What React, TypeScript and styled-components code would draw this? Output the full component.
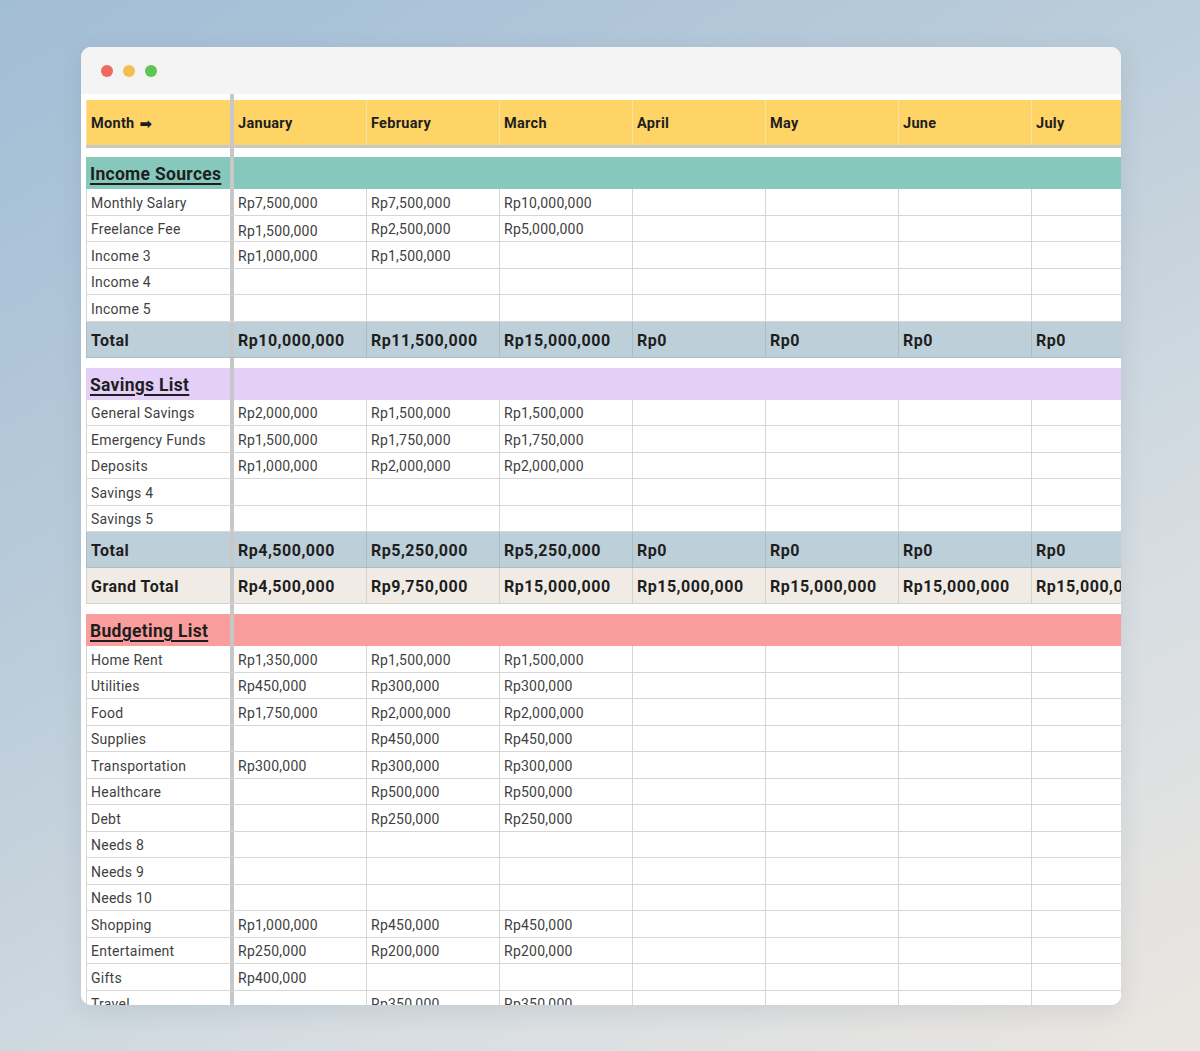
import React from 'react';
import styled, { createGlobalStyle, css } from 'styled-components';

const GlobalStyle = createGlobalStyle`
  html, body { margin: 0; padding: 0; }
  body {
    width: 1200px;
    height: 1051px;
    overflow: hidden;
    background: linear-gradient(150deg, #a2bdd6 0%, #bccdda 40%, #d6dde2 70%, #ebe6e1 100%);
    font-family: Roboto, "Liberation Sans", Arial, sans-serif;
  }
`;

const Page = styled.div`
  padding: 47px 0 0 81px;
`;

const Window = styled.div`
  width: 1040px;
  height: 958px;
  background: #ffffff;
  border-radius: 10px;
  overflow: hidden;
  box-shadow: 0 6px 24px rgba(40, 60, 80, 0.10);
  display: flex;
  flex-direction: column;
`;

const TitleBar = styled.div`
  height: 47px;
  flex: none;
  background: #f4f4f5;
  display: flex;
  align-items: center;
  gap: 10px;
  padding-left: 20px;
`;

const Light = styled.span<{ $c: string }>`
  width: 12px;
  height: 12px;
  border-radius: 50%;
  background: ${(p) => p.$c};
`;

const Sheet = styled.div`
  padding-left: 5px;
  display: flex;
  flex-direction: column;
`;

type Kind = 'blank' | 'head' | 'data' | 'total' | 'grand' | 'freeze';

const rowBg: Record<Kind, string> = {
  blank: '#ffffff',
  head: '#fed466',
  data: '#ffffff',
  total: '#bdcfd8',
  grand: '#f0ece5',
  freeze: '#c8c8c8',
};

const lineColor: Record<Kind, string> = {
  blank: 'transparent',
  head: '#f7e3a8',
  data: '#d6d6d6',
  total: '#aabcc6',
  grand: '#d8d3ca',
  freeze: '#c8c8c8',
};

const fontSize: Record<Kind, string> = {
  blank: '14px',
  head: '14.5px',
  data: '14px',
  total: '16px',
  grand: '16px',
  freeze: '14px',
};

const spacing: Record<Kind, string> = {
  blank: '0',
  head: '0.3px',
  data: '0.25px',
  total: '0.5px',
  grand: '0.5px',
  freeze: '0',
};

const Row = styled.div<{ $h: number; $kind: Kind }>`
  display: grid;
  grid-template-columns: 148px repeat(7, 133px);
  height: ${(p) => p.$h}px;
  flex: none;
  background: ${(p) => rowBg[p.$kind]};
  box-sizing: border-box;
  ${(p) =>
    p.$kind === 'data' || p.$kind === 'total' || p.$kind === 'grand'
      ? css`border-bottom: 1px solid ${lineColor[p.$kind]};`
      : ''}
`;

const Cell = styled.div<{ $kind: Kind; $low?: boolean }>`
  box-sizing: border-box;
  padding: 2px 4px 0;
  display: flex;
  align-items: ${(p) => (p.$low ? 'flex-end' : 'center')};
  ${(p) => (p.$low ? css`padding-bottom: 2px;` : '')}
  white-space: nowrap;
  overflow: hidden;
  border-right: 1px solid ${(p) => lineColor[p.$kind]};
  font-size: ${(p) => fontSize[p.$kind]};
  font-weight: ${(p) => (p.$kind === 'data' || p.$kind === 'blank' ? 400 : 700)};
  color: ${(p) => (p.$kind === 'data' ? '#3f3f3f' : '#1e1e1e')};
  letter-spacing: ${(p) => spacing[p.$kind]};
`;

const LabelCell = styled(Cell)`
  border-left: 1px solid ${(p) => (p.$kind === 'blank' ? 'transparent' : lineColor[p.$kind])};
  border-right: 4px solid #c8c8c8;
`;

const SectionRow = styled.div<{ $bg: string }>`
  display: grid;
  grid-template-columns: 148px 1fr;
  height: 32px;
  flex: none;
  background: ${(p) => p.$bg};
`;

const SectionLabel = styled.div`
  box-sizing: border-box;
  border-right: 4px solid #c8c8c8;
  padding: 2px 4px 0;
  display: flex;
  align-items: center;
  font-size: 17.5px;
  font-weight: 700;
  letter-spacing: 0.3px;
  color: #1e1e1e;
  text-decoration: underline;
  text-underline-offset: 3px;
  text-decoration-thickness: 1.5px;
  white-space: nowrap;
`;

const SectionFill = styled.div``;

const Arrow = styled.span`
  font-family: "DejaVu Sans", sans-serif;
  font-size: 15px;
  font-weight: 700;
  margin-left: 5px;
`;

const months = ['January', 'February', 'March', 'April', 'May', 'June', 'July'];

type DataRow = { label: string; values: string[]; low?: number[] };

const income: DataRow[] = [
  { label: 'Monthly Salary', values: ['Rp7,500,000', 'Rp7,500,000', 'Rp10,000,000'] },
  { label: 'Freelance Fee', values: ['Rp1,500,000', 'Rp2,500,000', 'Rp5,000,000'], low: [0] },
  { label: 'Income 3', values: ['Rp1,000,000', 'Rp1,500,000'] },
  { label: 'Income 4', values: [] },
  { label: 'Income 5', values: [] },
];

const savings: DataRow[] = [
  { label: 'General Savings', values: ['Rp2,000,000', 'Rp1,500,000', 'Rp1,500,000'] },
  { label: 'Emergency Funds', values: ['Rp1,500,000', 'Rp1,750,000', 'Rp1,750,000'] },
  { label: 'Deposits', values: ['Rp1,000,000', 'Rp2,000,000', 'Rp2,000,000'] },
  { label: 'Savings 4', values: [] },
  { label: 'Savings 5', values: [] },
];

const budgeting: DataRow[] = [
  { label: 'Home Rent', values: ['Rp1,350,000', 'Rp1,500,000', 'Rp1,500,000'] },
  { label: 'Utilities', values: ['Rp450,000', 'Rp300,000', 'Rp300,000'] },
  { label: 'Food', values: ['Rp1,750,000', 'Rp2,000,000', 'Rp2,000,000'] },
  { label: 'Supplies', values: ['', 'Rp450,000', 'Rp450,000'] },
  { label: 'Transportation', values: ['Rp300,000', 'Rp300,000', 'Rp300,000'] },
  { label: 'Healthcare', values: ['', 'Rp500,000', 'Rp500,000'] },
  { label: 'Debt', values: ['', 'Rp250,000', 'Rp250,000'] },
  { label: 'Needs 8', values: [] },
  { label: 'Needs 9', values: [] },
  { label: 'Needs 10', values: [] },
  { label: 'Shopping', values: ['Rp1,000,000', 'Rp450,000', 'Rp450,000'] },
  { label: 'Entertaiment', values: ['Rp250,000', 'Rp200,000', 'Rp200,000'] },
  { label: 'Gifts', values: ['Rp400,000'] },
  { label: 'Travel', values: ['', 'Rp350,000', 'Rp350,000'] },
];

const incomeTotal = ['Rp10,000,000', 'Rp11,500,000', 'Rp15,000,000', 'Rp0', 'Rp0', 'Rp0', 'Rp0'];
const savingsTotal = ['Rp4,500,000', 'Rp5,250,000', 'Rp5,250,000', 'Rp0', 'Rp0', 'Rp0', 'Rp0'];
const grandTotal = [
  'Rp4,500,000',
  'Rp9,750,000',
  'Rp15,000,000',
  'Rp15,000,000',
  'Rp15,000,000',
  'Rp15,000,000',
  'Rp15,000,000',
];

const SheetRow: React.FC<{ kind: Kind; h: number; label?: React.ReactNode; values?: string[]; low?: number[] }> = ({
  kind,
  h,
  label,
  values = [],
  low = [],
}) => (
  <Row $h={h} $kind={kind}>
    <LabelCell $kind={kind}>{label}</LabelCell>
    {months.map((m, i) => (
      <Cell key={m} $kind={kind} $low={low.includes(i)}>
        {values[i] ?? ''}
      </Cell>
    ))}
  </Row>
);

const Section: React.FC<{ title: string; bg: string }> = ({ title, bg }) => (
  <SectionRow $bg={bg}>
    <SectionLabel>{title}</SectionLabel>
    <SectionFill />
  </SectionRow>
);

const DATA_H = 26.5;

export default function App() {
  return (
    <>
      <GlobalStyle />
      <Page>
        <Window>
          <TitleBar>
            <Light $c="#ec6a5e" />
            <Light $c="#f4bf4f" />
            <Light $c="#61c554" />
          </TitleBar>
          <Sheet>
            <SheetRow kind="blank" h={6} />
            <Row $h={45} $kind="head">
              <LabelCell $kind="head">
                Month<Arrow>{'\u27A1\uFE0E'}</Arrow>
              </LabelCell>
              {months.map((m) => (
                <Cell key={m} $kind="head">
                  {m}
                </Cell>
              ))}
            </Row>
            <Row $h={3} $kind="freeze" />
            <SheetRow kind="blank" h={9} />

            <Section title="Income Sources" bg="#86c8bb" />
            {income.map((r) => (
              <SheetRow key={r.label} kind="data" h={DATA_H} label={r.label} values={r.values} low={r.low} />
            ))}
            <SheetRow kind="total" h={36} label="Total" values={incomeTotal} />
            <SheetRow kind="blank" h={10} />

            <Section title="Savings List" bg="#e3cff8" />
            {savings.map((r) => (
              <SheetRow key={r.label} kind="data" h={DATA_H} label={r.label} values={r.values} />
            ))}
            <SheetRow kind="total" h={36} label="Total" values={savingsTotal} />
            <SheetRow kind="grand" h={36} label="Grand Total" values={grandTotal} />
            <SheetRow kind="blank" h={10} />

            <Section title="Budgeting List" bg="#f99e9d" />
            {budgeting.map((r) => (
              <SheetRow key={r.label} kind="data" h={DATA_H} label={r.label} values={r.values} />
            ))}
          </Sheet>
        </Window>
      </Page>
    </>
  );
}
